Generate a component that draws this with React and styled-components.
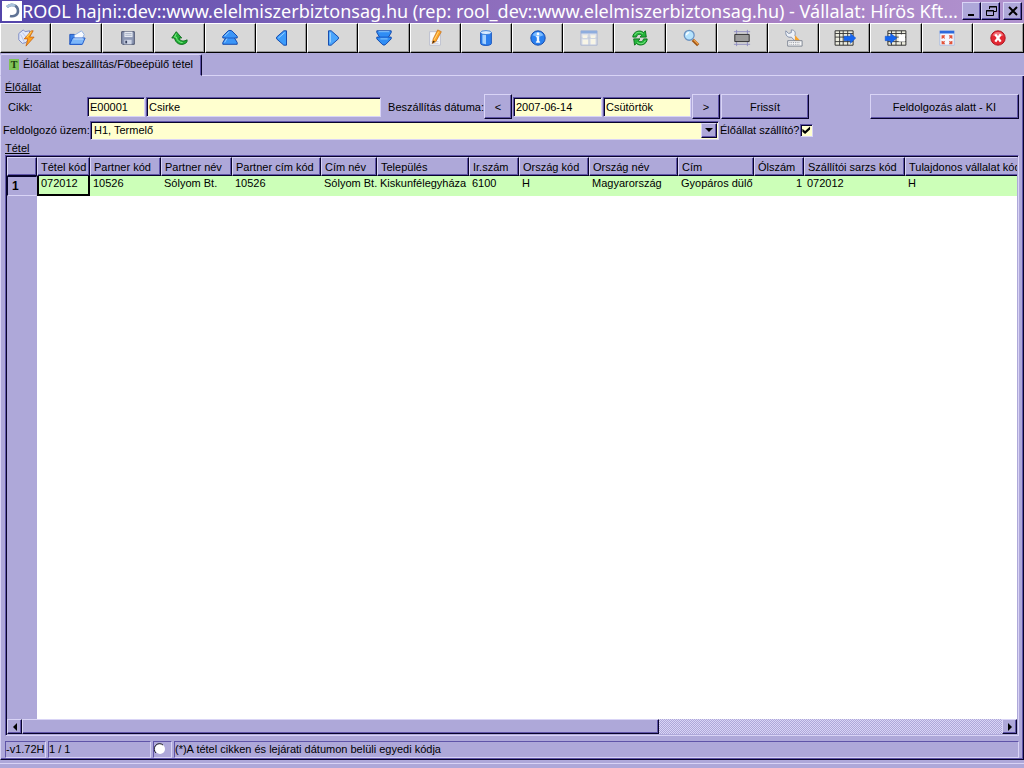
import React, { useState } from 'react';
import styled, { createGlobalStyle, css } from 'styled-components';

const face = '#aea8d9';
const light = '#d9d4f6';
const shadow = '#5f54a8';
const dark = '#08042c';
const cream = '#ffffcf';

const ICONS = [
	['Kapcsolat', (
		<>
			<path d="M2 5 7 1l2 2 5-1v8l-4 5-4 1-4-4z" fill="#e3e9fa" stroke="#7585c2" />
			<path d="M4 6l4 8M6 4l5 6" stroke="#b2bfe6" />
			<path d="M16 2 8 11h4l-2 8 9-10h-5l4-7z" fill="#ffa21c" stroke="#c2590b" strokeWidth=".8" />
			<path d="M16 3l-5 6" stroke="#ffe36b" />
		</>
	)],
	['Megnyitás', (
		<>
			<path d="M2 17V6h5l2 2h6v9z" fill="#3d82e8" stroke="#1c4fb8" />
			<path d="M7 7l8-5 3 4-2 5H7z" fill="#f8fbff" stroke="#8baee2" />
			<path d="M2 17 5 10h14l-3 7z" fill="#7db7fa" stroke="#1855c8" />
			<path d="M6 11h11" stroke="#d3e8ff" />
		</>
	)],
	['Mentés', (
		<>
			<path d="M3 3h14v14H4l-1-1z" fill="#8d98b4" stroke="#3f4866" />
			<path d="M6 3h9v6H6z" fill="#e6eaf2" />
			<path d="M7 5h7M7 7h7" stroke="#a8b2c6" />
			<path d="M6 12h8v5H6z" fill="#cfd6e6" />
			<path d="M7 13h2v3H7z" fill="#35405e" />
		</>
	)],
	['Visszavonás', (
		<>
			<path d="M7 3 2 10h3c1 6 7 9 12 6 2-1 2-2 2-4-3 2-8 2-9-2h3z" fill="#1fae35" stroke="#0a6a18" />
			<path d="M7 5 5 9h2c1 4 3 6 7 6" fill="none" stroke="#8df08f" />
		</>
	)],
	['Első', (
		<>
			<path d="M8 2q2-1 4 0l6 6v2h-3l3 5v2H2v-2l3-5H2V8z" fill="#3b95f7" stroke="#0a41a8" />
			<path d="M9 3 4 8M7 10l-3 5" fill="none" stroke="#a5d6ff" />
			<path d="M5 10h10" stroke="#1455c4" />
		</>
	)],
	['Előző', (
		<>
			<path d="M15 2v16h-3L4 11V9l8-7z" fill="#3b9bfb" stroke="#0a41a8" />
			<path d="M13 4 6 10" stroke="#a5d6ff" />
		</>
	)],
	['Következő', (
		<>
			<path d="M5 2v16h3l8-7V9L8 2z" fill="#4ba5fb" stroke="#0a41a8" />
			<path d="M7 4v11" stroke="#b3dcff" />
		</>
	)],
	['Utolsó', (
		<>
			<path d="M2 2h16v2l-3 5h3v2l-6 6q-2 2-4 0l-6-6V9h3L2 4z" fill="#2f8df5" stroke="#0a41a8" />
			<path d="M4 3h12M6 11h8" stroke="#97d0ff" />
			<path d="M5 9h10" stroke="#1455c4" />
		</>
	)],
	['Szerkesztés', (
		<>
			<path d="M4 3h12v15H4z" fill="#fafafc" stroke="#b9bccd" />
			<path d="M6 14h8M6 16h8" stroke="#c9cde0" />
			<path d="M13 1l4 2-6 11-4 2 1-5z" fill="#ffa629" stroke="#c56c14" strokeWidth=".8" />
			<path d="M7 16l1-3 2 1z" fill="#38260e" />
			<path d="M14 3 9 12" stroke="#ffe08a" />
		</>
	)],
	['Adatbázis', (
		<>
			<path d="M4 4v12c0 3 12 3 12 0V4z" fill="#2b7fee" stroke="#1651bb" />
			<path d="M6 6v10l4 1V6z" fill="#a6d2ff" />
			<ellipse cx="10" cy="4" rx="6" ry="2.2" fill="#d9ecff" stroke="#3a7fd8" />
		</>
	)],
	['Információ', (
		<>
			<circle cx="10" cy="10" r="8" fill="#2980f0" stroke="#0d44a8" />
			<path d="M4 7c2-5 10-5 12 0-4 2-8 2-12 0z" fill="#7dbcff" />
			<circle cx="10" cy="5.5" r="1.5" fill="#fff" />
			<path d="M8 8h3v6h1v1H8v-1h1V9H8z" fill="#fff" stroke="#fff" strokeWidth=".5" />
		</>
	)],
	['Nézet', (
		<>
			<path d="M1 2h18v16H1z" fill="#dfe2ea" stroke="#a9b4d0" />
			<path d="M1 2h18v3H1z" fill="#8eadde" />
			<path d="M10 5v13M1 10h18" stroke="#bcc5d8" />
			<path d="M3 7h5v3H3zM12 7h5v3h-5zM3 12h6v5H3zM12 11h5v6h-5z" fill="#f8f5e6" />
		</>
	)],
	['Frissítés', (
		<>
			<path d="M2 9c0-6 8-9 12-5l2-2 1 7h-7l2-2c-3-2-5-1-6 2z" fill="#24b53b" stroke="#08701a" />
			<path d="M18 11c0 6-8 9-12 5l-2 2-1-7h7l-2 2c3 2 5 1 6-2z" fill="#24b53b" stroke="#08701a" />
			<path d="M4 7c2-4 6-4 9-2M16 13c-2 4-6 4-9 2" fill="none" stroke="#8ff293" />
		</>
	)],
	['Keresés', (
		<>
			<path d="M12 12l6 6" stroke="#9c5312" strokeWidth="3.5" />
			<path d="M13 12l5 5" stroke="#f1a24a" strokeWidth="1.5" />
			<circle cx="8" cy="7" r="5.5" fill="#b5e3fd" stroke="#6b92c0" strokeWidth="1.4" />
			<path d="M5 7c0-2 1-3 3-3" fill="none" stroke="#fff" strokeWidth="1.5" />
		</>
	)],
	['Keret', (
		<>
			<path d="M4 1v18M16 1v18M1 3h18M1 17h18" stroke="#8b8ac0" />
			<path d="M2 6h16v8H2z" fill="#9c9c9c" stroke="#222" />
		</>
	)],
	['Beállítások', (
		<>
			<path d="M1 2l3 3 3-1V1c4 0 5 3 4 6l4 6-3 1-5-5C3 10 0 7 1 2z" fill="#eef2f8" stroke="#7c8aa6" />
			<path d="M11 7l7 7h-7z" fill="#f7a22c" />
			<path d="M3 13h16v6H3z" fill="#f8f8f8" stroke="#777f8d" />
			<path d="M5 15h12M5 17h12" stroke="#8c919b" strokeDasharray="1 1" />
		</>
	)],
	['Export', (
		<>
			<path d="M-1 2h20v16H-1z" fill="#ededdf" stroke="#222" />
			<path d="M-1 5h20M-1 9h20M-1 14h20M4 2v16M8 2v16M13 2v16" stroke="#333" />
			<path d="M9 8h7V5l6 5-6 6v-3H9z" fill="#1565f0" stroke="#0a49c4" strokeWidth=".5" />
		</>
	)],
	['Import', (
		<>
			<path d="M1 2h20v16H1z" fill="#ededdf" stroke="#222" />
			<path d="M1 5h20M1 9h20M1 14h20M5 2v16M10 2v16M16 2v16" stroke="#333" />
			<path d="M13 6h7v8h-7z" fill="#fff" />
			<path d="M-2 8h6V5l7 5-7 6v-3h-6z" fill="#1565f0" stroke="#0a49c4" strokeWidth=".5" />
		</>
	)],
	['Teljes képernyő', (
		<>
			<path d="M2 2h16v16H2z" fill="#f4f7fd" stroke="#a9bce2" />
			<path d="M2 2h16v3H2z" fill="#2a69dc" />
			<path d="M4 7h4L7 9l1 2-2-1-2 1zM16 7h-4l1 2-1 2 2-1 2 1zM4 17h4l-1-2 1-2-2 1-2-1zM16 17h-4l1-2-1-2 2 1 2-1z" fill="#e2543a" />
		</>
	)],
	['Bezárás', (
		<>
			<circle cx="10" cy="10" r="8" fill="#e32832" stroke="#a80c18" />
			<path d="M4 7c2-5 10-5 12 0-4 2-8 2-12 0z" fill="#f4747a" />
			<path d="M7 6l6 8M13 6l-6 8" stroke="#fff" strokeWidth="2.6" />
		</>
	)]
];

const COLUMNS = [
	['Tétel kód', 53, '072012'],
	['Partner kód', 71, '10526'],
	['Partner név', 71, 'Sólyom Bt.'],
	['Partner cím kód', 89, '10526'],
	['Cím név', 56, 'Sólyom Bt.'],
	['Település', 92, 'Kiskunfélegyháza'],
	['Ir.szám', 50, '6100'],
	['Ország kód', 70, 'H'],
	['Ország név', 89, 'Magyarország'],
	['Cím', 76, 'Gyopáros dülő'],
	['Ólszám', 50, '1'],
	['Szállítói sarzs kód', 101, '072012'],
	['Tulajdonos vállalat kód', 130, 'H']
];

const App = () => {
	const [plant, setPlant] = useState('H1, Termelő');
	const [supplier, setSupplier] = useState(true);

	return (
		<Window>
			<GlobalStyle />
			<TitleBar>
				<Logo viewBox="0 0 20 20">
					<path d="M0 0h20v20H0z" fill="#fff" />
					<path d="M5 6c4-4 11-2 11 4 0 4-4 6-8 5" fill="none" stroke="#5f7395" strokeWidth="2.6" />
					<path d="M5 6c2-2 5-3 8-1" fill="none" stroke="#a9c3dc" strokeWidth="2.6" />
				</Logo>
				<Title>ROOL hajni::dev::www.elelmiszerbiztonsag.hu (rep: rool_dev::www.elelmiszerbiztonsag.hu) - Vállalat: Hírös Kft...</Title>
				<WindowButtons>
					<WindowButton aria-label="Kis méret">
						<svg width="12" height="12"><path d="M2 9h6v2H2z" fill="#000" /></svg>
					</WindowButton>
					<WindowButton aria-label="Előző méret">
						<svg width="12" height="12" fill="none" stroke="#000">
							<path d="M4.500 4V1.500h7v5H9M4 2h8M1.500 5.500h7v5h-7zM1 6h8" />
						</svg>
					</WindowButton>
					<WindowButton aria-label="Bezárás" $apart>
						<svg width="12" height="12"><path d="M2 2l8 8M10 2l-8 8" stroke="#000" strokeWidth="2" /></svg>
					</WindowButton>
				</WindowButtons>
			</TitleBar>

			<Toolbar>
				{ICONS.map(([name, drawing]) => (
					<Tool key={name} aria-label={name}>
						<ToolIcon viewBox="0 0 20 20">{drawing}</ToolIcon>
					</Tool>
				))}
			</Toolbar>

			<TabRow>
				<Tab>
					<TabIcon>T</TabIcon>
					Élőállat beszállítás/Főbeépülő tétel
				</Tab>
				<TabRest />
			</TabRow>

			<Panel>
				<GroupTitle>Élőállat</GroupTitle>
				<FormRow>
					<Label htmlFor="cikk" $width={81} $indent>Cikk:</Label>
					<Field id="cikk" $width={58} defaultValue="E00001" />
					<Field aria-label="Cikk neve" $width={235} defaultValue="Csirke" />
					<Label htmlFor="datum" $width={101} $indent>&nbsp;Beszállítás dátuma:</Label>
					<Button $width={28} aria-label="Előző nap">&lt;</Button>
					<Field id="datum" $width={89} defaultValue="2007-06-14" />
					<Field aria-label="Nap" $width={88} defaultValue="Csütörtök" />
					<Button $width={28} aria-label="Következő nap">&gt;</Button>
					<Button $width={88}>Frissít</Button>
					<Button $width={149} $right>Feldolgozás alatt - KI</Button>
				</FormRow>
				<SelectRow>
					<Label htmlFor="uzem" $width={87}>Feldolgozó üzem:</Label>
					<SelectBox>
						<Select id="uzem" value={plant} onChange={(e) => setPlant(e.target.value)}>
							<option>H1, Termelő</option>
						</Select>
						<SelectArrow>
							<svg width="8" height="4"><path d="M0 0h8L4 4z" fill="#000" /></svg>
						</SelectArrow>
					</SelectBox>
					<CheckLabel htmlFor="szallito">Élőállat szállító?</CheckLabel>
					<Check
						id="szallito"
						type="checkbox"
						checked={supplier}
						onChange={(e) => setSupplier(e.target.checked)}
					/>
				</SelectRow>
				<GroupTitle>Tétel</GroupTitle>

				<GridFrame>
					<GridBody>
						<Table>
							<colgroup>
								<Col $width={30} />
								{COLUMNS.map(([name, width]) => <Col key={name} $width={width} />)}
							</colgroup>
							<thead>
								<tr>
									<Head />
									{COLUMNS.map(([name]) => <Head key={name}>{name}</Head>)}
								</tr>
							</thead>
							<tbody>
								<tr>
									<RowHead>1</RowHead>
									{COLUMNS.map(([name, , value], i) => (
										<Cell key={name} $selected={i === 0} $number={name === 'Ólszám'}>{value}</Cell>
									))}
								</tr>
							</tbody>
						</Table>
						<Gutter />
					</GridBody>
					<ScrollBar>
						<ScrollButton aria-label="Balra">
							<svg width="4" height="8"><path d="M4 0v8L0 4z" fill="#000" /></svg>
						</ScrollButton>
						<ScrollTrack><ScrollThumb /></ScrollTrack>
						<ScrollButton aria-label="Jobbra">
							<svg width="4" height="8"><path d="M0 0v8l4-4z" fill="#000" /></svg>
						</ScrollButton>
					</ScrollBar>
				</GridFrame>

				<StatusBar>
					<StatusCell $width={41}>-v1.72H</StatusCell>
					<StatusCell $width={103}>1 / 1</StatusCell>
					<StatusCell $width={19}>
						<Lamp viewBox="0 0 12 12">
							<circle cx="6" cy="6" r="5" fill="#fff" />
							<path d="M2 10A5 5 0 0 1 9 2" fill="none" stroke="#222" />
						</Lamp>
					</StatusCell>
					<StatusCell>(*)A tétel cikken és lejárati dátumon belüli egyedi kódja</StatusCell>
				</StatusBar>
			</Panel>
			<Footer />
		</Window>
	);
}

const GlobalStyle = createGlobalStyle`
	* {
		box-sizing: border-box;
	}
	body {
		margin: 0;
		background: ${face};
	}
	body, button, input, select {
		font-family: "Liberation Sans", Arial, sans-serif;
		font-size: 11px;
		line-height: 14px;
		color: #000;
	}
`
const raised = css`
	border: 1px solid;
	border-color: ${light} ${dark} ${dark} ${light};
	box-shadow: inset -1px -1px 0 ${shadow};
`
const sunken = css`
	border: 1px solid;
	border-color: ${shadow} ${light} ${light} ${shadow};
	box-shadow: inset 1px 1px 0 ${dark};
`
const Window = styled.div`
	display: flex;
	flex-direction: column;
	min-height: 100vh;
	overflow: hidden;
	background: ${face};
`
const TitleBar = styled.header`
	display: flex;
	align-items: center;
	height: 23px;
	padding: 0 2px 1px;
	background: linear-gradient(to right, #5344aa, #7c62b8 30%, #a77fc4 75%, #b194cf);
`
const Logo = styled.svg`
	flex: none;
	width: 20px;
	height: 20px;
`
const Title = styled.h1`
	flex: 1;
	min-width: 0;
	margin: 0;
	font-family: "Noto Sans", sans-serif;
	font-size: 18px;
	font-weight: 400;
	line-height: 22px;
	color: #fff;
	white-space: nowrap;
	overflow: hidden;
`
const WindowButtons = styled.div`
	display: flex;
	flex: none;
`
const WindowButton = styled.button`
	display: flex;
	align-items: center;
	justify-content: center;
	width: 19px;
	height: 18px;
	margin-left: ${({ $apart }) => ($apart ? '3px' : 0)};
	padding: 0;
	background: ${face};
	${raised}
`
const Toolbar = styled.nav`
	display: flex;
	height: 30px;
	background: #000;
`
const Tool = styled.button`
	display: flex;
	flex: 1;
	align-items: center;
	justify-content: center;
	padding: 0;
	background: #d8d8d8;
	border: 1px solid;
	border-color: #fff #000 #000 #fff;
	box-shadow: inset -1px -1px 0 #999;
`
const ToolIcon = styled.svg`
	width: 18px;
	height: 18px;
	overflow: visible;
	fill: none;
`
const TabRow = styled.div`
	display: flex;
	height: 23px;
`
const Tab = styled.div`
	display: flex;
	align-items: center;
	flex: none;
	width: 202px;
	margin-top: 1px;
	padding: 0 0 3px 7px;
	border: 1px solid;
	border-color: ${light} ${dark} transparent ${light};
	border-radius: 2px 2px 0 0;
	box-shadow: inset -1px 0 0 ${shadow};
`
const TabIcon = styled.span`
	width: 10px;
	height: 11px;
	margin: 2px 4px 0 1px;
	font-family: "Liberation Serif", serif;
	font-size: 10px;
	font-weight: 700;
	line-height: 11px;
	text-align: center;
	color: #173c0c;
	background: #7fc257;
`
const TabRest = styled.div`
	flex: 1;
	border-bottom: 1px solid ${light};
`
const Panel = styled.main`
	display: flex;
	flex: 1;
	flex-direction: column;
	padding: 4px 4px 1px;
	border: 1px solid;
	border-color: transparent ${dark} ${dark} ${light};
	border-top: none;
	box-shadow: inset -1px -1px 0 ${shadow};
`
const GroupTitle = styled.h2`
	margin: 0;
	font-size: 11px;
	font-weight: 400;
	line-height: 14px;
	text-decoration: underline;
`
const FormRow = styled.div`
	display: flex;
	align-items: center;
	gap: 1px;
	height: 25px;
`
const SelectRow = styled.div`
	display: flex;
	align-items: center;
	height: 22px;
	margin-left: -2px;
`
const Label = styled.label`
	flex: none;
	width: ${({ $width }) => $width}px;
	padding-left: ${({ $indent }) => ($indent ? '3px' : 0)};
	white-space: nowrap;
`
const Field = styled.input`
	width: ${({ $width }) => $width}px;
	height: 20px;
	padding: 0 2px;
	background: ${cream};
	outline: none;
	${sunken}
`
const Button = styled.button`
	flex: none;
	width: ${({ $width }) => $width}px;
	height: 25px;
	margin-left: ${({ $right }) => ($right ? 'auto' : 0)};
	padding: 0;
	background: ${face};
	${raised}
`
const SelectBox = styled.div`
	display: flex;
	flex: none;
	width: 629px;
	height: 19px;
	padding: 1px;
	background: ${cream};
	${sunken}
`
const Select = styled.select`
	flex: 1;
	padding: 0 2px;
	appearance: none;
	background: transparent;
	border: none;
	outline: none;
`
const SelectArrow = styled.span`
	display: flex;
	align-items: center;
	justify-content: center;
	width: 16px;
	background: ${face};
	pointer-events: none;
	${raised}
`
const CheckLabel = styled.label`
	flex: none;
	min-width: 77px;
	padding-left: 1px;
	white-space: nowrap;
`
const Check = styled.input`
	display: flex;
	flex: none;
	width: 13px;
	height: 13px;
	margin: 0;
	padding: 1px;
	appearance: none;
	background: ${cream};
	${sunken}

	&:checked::after {
		content: '';
		flex: 1;
		background: #000;
		clip-path: polygon(10% 35%, 40% 60%, 95% 10%, 95% 45%, 40% 95%, 10% 70%);
	}
`
const GridFrame = styled.section`
	display: flex;
	flex: 1;
	flex-direction: column;
	min-width: 0;
	padding: 1px;
	${sunken}
`
const GridBody = styled.div`
	display: flex;
	flex: 1;
	flex-direction: column;
	overflow: hidden;
	background: #fff;
`
const Table = styled.table`
	flex: none;
	width: 1028px;
	table-layout: fixed;
	border-collapse: separate;
	border-spacing: 0;
`
const Col = styled.col`
	width: ${({ $width }) => $width}px;
`
const Head = styled.th`
	height: 19px;
	padding: 0 0 0 3px;
	font-weight: 400;
	text-align: left;
	white-space: nowrap;
	overflow: hidden;
	background: ${face};
	${raised}
`
const RowHead = styled.th`
	padding: 0 0 0 4px;
	font-size: 12px;
	font-weight: 700;
	text-align: left;
	background: ${face};
	border: 1px solid;
	border-color: ${dark} ${face} ${light} ${dark};
`
const Cell = styled.td`
	height: 20px;
	padding: ${({ $selected }) => ($selected ? '0 0 0 2px' : '0 2px 0 3px')};
	vertical-align: top;
	text-align: ${({ $number }) => ($number ? 'right' : 'left')};
	white-space: nowrap;
	background: #ccffb8;
	border: ${({ $selected }) => ($selected ? '2px solid #000' : 'none')};
	border-top-width: 0;
`
const Gutter = styled.div`
	flex: 1;
	width: 30px;
	background: ${face};
`
const ScrollBar = styled.div`
	display: flex;
	height: 15px;
`
const ScrollButton = styled.button`
	display: flex;
	align-items: center;
	justify-content: center;
	width: 15px;
	padding: 0;
	background: ${face};
	${raised}
`
const ScrollTrack = styled.div`
	display: flex;
	flex: 1;
	background: repeating-conic-gradient(${light} 0 25%, ${face} 0 50%) 0 0 / 2px 2px;
`
const ScrollThumb = styled.div`
	width: 65%;
	background: ${face};
	${raised}
`
const StatusBar = styled.footer`
	display: flex;
	gap: 2px;
	height: 17px;
	margin-top: 5px;
`
const StatusCell = styled.div`
	display: flex;
	align-items: center;
	flex: ${({ $width }) => ($width ? 'none' : 1)};
	width: ${({ $width }) => ($width ? `${$width}px` : 'auto')};
	padding-bottom: 2px;
	white-space: nowrap;
	border: 1px solid;
	border-color: ${shadow} ${light} ${light} ${shadow};
`
const Lamp = styled.svg`
	width: 12px;
	height: 12px;
`
const Footer = styled.div`
	height: 8px;
	border-bottom: 4px solid ${face};
	box-shadow: inset 0 -1px 0 ${light};
`

export default App;
